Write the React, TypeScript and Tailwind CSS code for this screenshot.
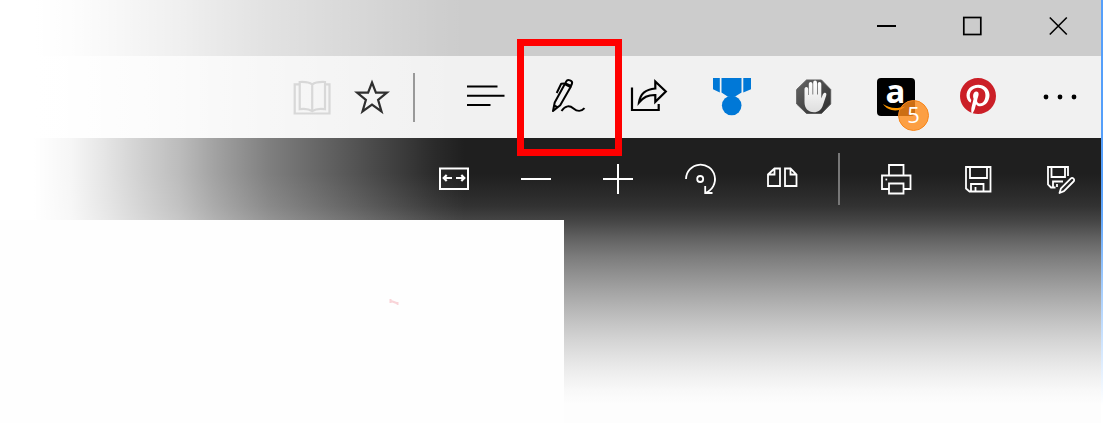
import type { ReactNode } from "react";

function Cell({ children, label }: { children: ReactNode; label: string }) {
  return (
    <button aria-label={label} className="flex h-[82px] w-[82px] shrink-0 items-center justify-center">
      {children}
    </button>
  );
}

/* Every glyph is drawn on a 46 x 46 grid whose centre is the centre of its cell. */
function Glyph({ children, w = 2, className = "" }: { children: ReactNode; w?: number; className?: string }) {
  return (
    <svg width="46" height="46" viewBox="0 0 46 46" fill="none" stroke="currentColor" strokeWidth={w} className={className}>
      {children}
    </svg>
  );
}

function TitleBar() {
  return (
    <header className="flex h-14 items-center justify-end bg-[#cccccc] bg-[linear-gradient(to_right,#fff_34px,rgb(255_255_255/.96)_71px,rgb(255_255_255/.88)_107px,rgb(255_255_255/.79)_143px,rgb(255_255_255/.7)_179px,rgb(255_255_255/.59)_214px,rgb(255_255_255/.43)_268px,rgb(255_255_255/.23)_357px,rgb(255_255_255/.05)_435px,transparent_465px)] pb-1 text-black">
      <button aria-label="Minimize" className="flex w-[86px] justify-center">
        <Glyph><path d="M14 23H33" /></Glyph>
      </button>
      <button aria-label="Maximize" className="flex w-[86px] justify-center">
        <Glyph w={1.7}><rect x="14.800" y="14.500" width="17" height="17" /></Glyph>
      </button>
      <button aria-label="Close" className="flex w-[86px] justify-center">
        <Glyph w={1.6}><path d="M14.800 14.500 31.800 31.500M31.800 14.500 14.800 31.500" /></Glyph>
      </button>
    </header>
  );
}

function Toolbar() {
  return (
    <nav className="flex h-[82px] items-center justify-end bg-[#f1f1f1] bg-[linear-gradient(to_right,#fff_34px,rgb(255_255_255/.96)_71px,rgb(255_255_255/.88)_107px,rgb(255_255_255/.79)_143px,rgb(255_255_255/.7)_179px,rgb(255_255_255/.59)_214px,rgb(255_255_255/.43)_268px,rgb(255_255_255/.23)_357px,rgb(255_255_255/.05)_435px,transparent_465px)] text-black">
      <button aria-label="Reading view" className="flex w-[60px] justify-center text-[#d8d8d8]">
        <Glyph w={2.2}>
          <path d="M10.500 10.300H5.700V39.500H40.500V10.300H36" />
          <path d="M23.200 10.500C20 8 15 7.800 10.700 8V35.200C16 34.500 20 34.800 23.200 37.200C26.500 34.800 31 34.500 36 35.200V8C32 7.800 26.500 8 23.200 10.500ZM23.200 10.500V37.200" />
        </Glyph>
      </button>
      <button aria-label="Favorites" className="flex w-[60px] justify-center text-[#2f2f2f]">
        <Glyph w={2.200}>
          <path strokeMiterlimit="8" d="M23 8.500 26.900 18.700H37.900L29.100 25.900 32.500 37.400 23 30.600 13.500 37.400 16.900 25.900 8.100 18.700H19.100Z" />
        </Glyph>
      </button>
      <span className="mr-[30px] ml-[11px] h-[49px] w-0.5 bg-[#999]" />
      <Cell label="Hub">
        <Glyph><path d="M4 12.500H34.500M4 21.700H41.500M4 31H27.500" /></Glyph>
      </Cell>
      <Cell label="Make a Web Note">
        <Glyph w={2}>
          <g strokeLinejoin="round">
            <path d="M8 37 9.700 28.500 19.700 10.200 25.500 13.200 15.200 31.200 8 37ZM9 31.500 13 33.500" />
            <path d="M19.700 10.200 21.500 7C22.500 5 28 6.500 27 9.500L25.500 13.200M20.500 9.500 26 12" />
            <path d="M19.500 9.500 16.200 9.800 11.700 19" />
            <path d="M16.500 37C20.500 31 25 31.500 28.500 34.500C32 37.500 36.500 37.700 39.500 34.200" />
          </g>
        </Glyph>
      </Cell>
      <Cell label="Share">
        <Glyph w={2.200}>
          <path d="M5 13.500V36H31.700V30" />
          <path strokeMiterlimit="8" d="M12 28.500C13 21 18 15.300 28.300 14.500V7.500L38.800 17.500 28.300 27.800V21C20.500 20.800 16.500 23.500 12 28.500Z" />
        </Glyph>
      </Cell>
      <Cell label="Rewards">
        <Glyph className="text-[#0078d7]">
          <g fill="currentColor" stroke="none">
            <path d="M4 4H10.800V18.600L4 15.200ZM12.500 4H32.500V18.500L25.800 22.800H19L12.500 18.500ZM34.300 4H42V15.200L34.300 18.600Z" />
            <circle cx="22.700" cy="31.500" r="9.800" />
          </g>
        </Glyph>
      </Cell>
      <Cell label="Ad blocker">
        <Glyph>
          <defs>
            <linearGradient id="sign" x1="0" y1="0" x2="1" y2="1">
              <stop offset="0" stopColor="#666" />
              <stop offset="1" stopColor="#2c2c2c" />
            </linearGradient>
            <linearGradient id="palm" x1="0" y1="0" x2="0" y2="1">
              <stop offset="0" stopColor="#fff" />
              <stop offset="1" stopColor="#dedede" />
            </linearGradient>
          </defs>
          <path d="M15.500 6H30.500L39.700 15.500V30L30.500 39.500H15.500L5.700 30V15.500Z" fill="url(#sign)" stroke="#5c5c5c" strokeWidth="1" />
          <path stroke="none" fill="url(#palm)" d="M13.500 15C13.500 12.300 17.200 12.300 17.200 15V21H17.800V10C17.800 7.200 21.500 7.200 21.500 10V20.500H22.200V8.700C22.200 5.900 26 5.900 26 8.700V20.500H26.700V10C26.700 7.200 30.300 7.200 30.300 10V24.500L31.800 20.500C33 18 36.200 18.300 35.200 21.500L32 31C30.500 36 27 38.300 23 38.300C17 38.300 13.500 34 13.500 28Z" />
        </Glyph>
      </Cell>
      <Cell label="Amazon Assistant">
        <span className="relative -ml-px flex h-[38px] w-[38px] justify-center rounded-[4px] bg-black">
          <span className="-mt-[6px] font-['Open_Sans',sans-serif] text-[33px] leading-[37px] font-bold text-white">a</span>
          <svg viewBox="0 0 38 38" className="absolute inset-0" fill="#ff9900">
            <path d="M6 26C11 29.500 18 31.500 28 28.500C22 34.500 11 33.500 6 26Z" />
          </svg>
          <span className="absolute top-[22px] left-[21.500px] flex h-[31px] w-[31px] items-center justify-center rounded-full border border-[#f7861b] bg-[#ff8a18]/80 pb-[3px] font-['Open_Sans',sans-serif] text-[22px] leading-none text-white">
            5
          </span>
        </span>
      </Cell>
      <Cell label="Pinterest">
        <svg width="36" height="36" viewBox="0 0 24 24" fill="#cb1f27" className="-mt-0.5 -ml-px">
          <circle cx="12" cy="12" r="11.500" fill="#fff" />
          <path d="M12 0C5.373 0 0 5.372 0 12c0 5.084 3.163 9.426 7.627 11.174-.105-.949-.2-2.405.042-3.441.218-.937 1.407-5.965 1.407-5.965s-.359-.719-.359-1.782c0-1.668.967-2.914 2.171-2.914 1.023 0 1.518.769 1.518 1.690 0 1.029-.655 2.568-.994 3.995-.283 1.194.599 2.169 1.777 2.169 2.133 0 3.772-2.249 3.772-5.495 0-2.873-2.064-4.882-5.012-4.882-3.414 0-5.418 2.561-5.418 5.207 0 1.031.397 2.138.893 2.738a.36.36 0 0 1 .083.345l-.333 1.360c-.053.220-.174.267-.402.161-1.499-.698-2.436-2.889-2.436-4.649 0-3.785 2.750-7.262 7.929-7.262 4.163 0 7.398 2.967 7.398 6.931 0 4.136-2.607 7.464-6.227 7.464-1.216 0-2.359-.631-2.750-1.378l-.748 2.853c-.271 1.043-1.002 2.350-1.492 3.146C9.570 23.812 10.763 24 12 24c6.627 0 12-5.373 12-12 0-6.628-5.373-12-12-12z" />
        </svg>
      </Cell>
      <Cell label="More">
        <Glyph>
          <g fill="currentColor" stroke="none">
            <circle cx="9" cy="23" r="2.400" />
            <circle cx="23" cy="23" r="2.400" />
            <circle cx="37" cy="23" r="2.400" />
          </g>
        </Glyph>
      </Cell>
    </nav>
  );
}

function PdfBar() {
  return (
    <nav className="flex h-[82px] items-center justify-end bg-[linear-gradient(to_right,#fff_34px,rgb(255_255_255/.96)_71px,rgb(255_255_255/.88)_107px,rgb(255_255_255/.79)_143px,rgb(255_255_255/.7)_179px,rgb(255_255_255/.59)_214px,rgb(255_255_255/.43)_268px,rgb(255_255_255/.23)_357px,rgb(255_255_255/.05)_435px,transparent_465px)] text-white">
      <Cell label="Fit to width">
        <Glyph>
          <rect x="9" y="12.500" width="28" height="20.500" />
          <path d="M12.500 22H21M15.700 19 12.700 22 15.700 25M33.500 22H25M30.300 19 33.300 22 30.300 25" strokeWidth="2.200" />
        </Glyph>
      </Cell>
      <Cell label="Zoom out">
        <Glyph><path d="M8 23H38" /></Glyph>
      </Cell>
      <Cell label="Zoom in">
        <Glyph><path d="M8 23H38M23 8V38" /></Glyph>
      </Cell>
      <Cell label="Rotate">
        <Glyph w={1.8}>
          <path d="M9 23A14.500 14.500 0 1 1 28.500 36.800" />
          <circle cx="23.200" cy="23" r="3" />
          <path d="M28.200 30V37H35.500" />
        </Glyph>
      </Cell>
      <Cell label="Page layout">
        <Glyph w={1.800}>
          <path d="M15.500 12.500H21V30H9V18.500ZM15.500 12.500V18.500H9" />
          <path d="M31.500 12.500H26V30H37.500V18.500ZM31.500 12.500V18.500H37.500" />
        </Glyph>
      </Cell>
      <span className="mx-[15px] h-[52px] w-0.5 bg-[#777]" />
      <Cell label="Print">
        <Glyph w={1.800}>
          <path d="M16 19.500V9H30.500V19.500M16 33H9V19.500H37.500V33H30.500M16 27.500H30.500V37.500H16Z" />
          <path d="M12.500 23.500H14.200" />
        </Glyph>
      </Cell>
      <Cell label="Save">
        <Glyph w={1.800}>
          <path d="M11 11H35.500V35.500H14.500L11 32.500ZM15 11V22H32V11" />
          <path d="M16 35V28H28.500V35M20.500 31V35" />
        </Glyph>
      </Cell>
      <Cell label="Save as">
        <Glyph w={1.800}>
          <path d="M31 20V11H11V28.500L14 31.500H18.500M14.500 11V21H28V11M16 31V25.500H26M20 28V31" />
          <path strokeLinejoin="round" d="M22.500 37 24 32.300 33.700 22.600C35.500 20.800 38.500 23.500 36.500 25.500L27 35.200Z" />
        </Glyph>
      </Cell>
    </nav>
  );
}

export default function App() {
  return (
    <div className="flex h-[423px] w-[1103px] overflow-hidden bg-white">
      <main className="relative flex w-[1101px] flex-col">
        <TitleBar />
        <Toolbar />
        <section className="h-[285px] bg-[linear-gradient(to_bottom,#1f1f1f_36px,#292929_54px,#323232_68px,#454545_83px,#646464_102px,#7c7c7c_119px,#8f8f8f_135px,#a2a2a2_152px,#b4b4b4_169px,#c4c4c4_185px,#d4d4d4_202px,#e2e2e2_219px,#eeeeee_235px,#f8f8f8_252px,#fdfdfd_266px)]">
          <PdfBar />
          <article className="h-[203px] w-[564px] bg-[#fefefe] pt-[78px] pl-[389px]">
            <svg width="12" height="8" viewBox="0 0 12 8" fill="none" stroke="#f9d4d8" strokeWidth="2">
              <path d="M1.500 1V5M2 3 9 5.500M8.500 4V7" />
            </svg>
          </article>
        </section>
        <div className="absolute top-[39px] left-[517px] h-[117px] w-[105px] border-[7px] border-[#ff0000]" />
      </main>
      <aside className="w-0.5 bg-[linear-gradient(to_bottom,#559ffa_180px,#65a9fb_220px,#a6cefd_290px,#d9eafe_357px,#fff_405px)]" />
    </div>
  );
}
